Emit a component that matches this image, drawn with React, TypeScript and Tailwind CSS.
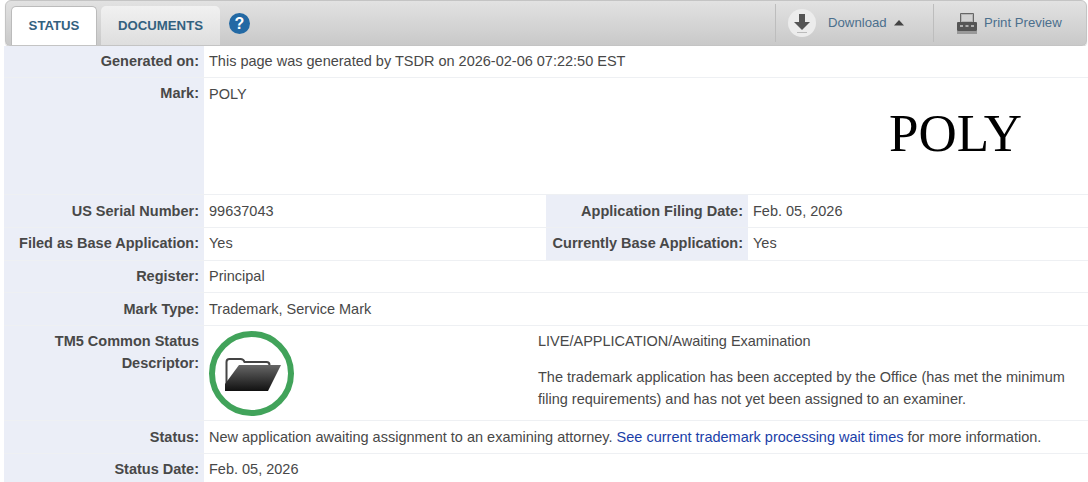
import React from "react";

const font = { fontFamily: '"Liberation Sans", Arial, sans-serif' };

function Row({ label, h, top, children }: { label: React.ReactNode; h: string; top?: boolean; children: React.ReactNode }) {
  const pt = top ? "pt-[7px]" : "pt-[6px]";
  return (
    <div className={`flex ${h} border-b border-[#eef0f3]`}>
      <div className={`w-[200px] shrink-0 bg-[#ebeef7] pr-[5px] ${pt} text-right font-bold leading-[18px] text-[#484848]`}>{label}</div>
      <div className={`min-w-0 flex-1 bg-white pl-[5px] ${pt} leading-[18px]`}>{children}</div>
    </div>
  );
}

function HalfRow({ label, value, label2, value2, top }: { label: string; value: string; label2: string; value2: string; top?: boolean }) {
  const pt = top ? "pt-[7px]" : "pt-[6px]";
  return (
    <div className="flex h-[33px] border-b border-[#eef0f3]">
      <div className={`w-[200px] shrink-0 bg-[#ebeef7] pr-[5px] ${pt} text-right font-bold leading-[18px] text-[#484848]`}>{label}</div>
      <div className={`w-[342px] shrink-0 bg-white pl-[5px] ${pt} leading-[18px]`}>{value}</div>
      <div className={`w-[202px] shrink-0 bg-[#ebeef7] pr-[5px] ${pt} text-right font-bold leading-[18px] text-[#484848]`}>{label2}</div>
      <div className={`flex-1 bg-white pl-[5px] ${pt} leading-[18px]`}>{value2}</div>
    </div>
  );
}

export default function App() {
  return (
    <div className="h-[482px] w-[1088px] overflow-hidden bg-white text-[14.5px] text-[#484848]" style={font}>
      <div className="ml-[5px] mr-[1px] flex h-[46px] items-stretch rounded-t-[6px] rounded-b-[5px] border border-[#c4c4c4] bg-gradient-to-b from-[#e2e2e2] to-[#c9c9c9] pl-[5px] shadow-[0_1px_1px_#ccc]">
        <div className="mt-[5px] flex w-[86px] items-center justify-center rounded-t-[5px] border-x border-t border-[#bbb] bg-white text-[13.2px] font-bold text-[#33617f]">STATUS</div>
        <div className="ml-[4px] mt-[5px] flex w-[119px] items-center justify-center rounded-t-[5px] bg-gradient-to-b from-[#f1f1f1] to-[#dedede] text-[13.2px] font-bold text-[#33617f]">DOCUMENTS</div>
        <div className="ml-[9px] flex items-center">
          <svg width="21" height="21" viewBox="0 0 21 21">
            <circle cx="10.5" cy="10.5" r="10.5" fill="#2369a4" />
            <text x="10.5" y="16" textAnchor="middle" fontSize="16" fontWeight="700" fill="#fff" fontFamily="Liberation Sans">?</text>
          </svg>
        </div>
        <div className="ml-auto flex items-stretch">
          <div className="my-[3px] w-px bg-[#bdbdbd]" />
          <div className="flex w-[157px] items-center pl-[12px]">
            <svg width="28" height="28" viewBox="0 0 28 28">
              <circle cx="14" cy="14" r="14" fill="#ececec" />
              <path d="M11 5h6v8h5l-8 8-8-8h5z" fill="#555" />
              <rect x="9" y="23" width="10" height="1" fill="#bbb" />
            </svg>
            <span className="ml-[12px] text-[13.2px] text-[#4b6f8d]">Download</span>
            <svg className="ml-[7px]" width="10" height="6" viewBox="0 0 10 6"><path d="M5 0l5 5.5H0z" fill="#444" /></svg>
          </div>
          <div className="my-[3px] w-px bg-[#bdbdbd]" />
          <div className="flex w-[152px] items-center pl-[23px]">
            <svg width="20" height="21" viewBox="0 0 20 21">
              <path d="M3.5 .5h13v9h-13z" fill="#b5b5b5" stroke="#666" />
              <path d="M5 3h10M5 5h10M5 7h10" stroke="#eee" />
              <rect x="0" y="9" width="20" height="9" rx="1" fill="#555" />
              <rect x="0" y="18" width="20" height="3" fill="#999" />
              <path d="M3 13h3M8.5 13h3M14 13h3" stroke="#ccc" strokeWidth="1.5" />
            </svg>
            <span className="ml-[7px] text-[13.2px] text-[#4b6f8d]">Print Preview</span>
          </div>
        </div>
      </div>
      <div className="ml-[4px]">
        <Row label="Generated on:" h="h-[32px]">This page was generated by TSDR on 2026-02-06 07:22:50 EST</Row>
        <Row label="Mark:" h="h-[117px]">
          <div className="relative pt-[1px]">
            POLY
            <span className="absolute left-[680px] top-[24px] text-[53px] leading-[50px] text-black" style={{ fontFamily: '"Liberation Serif", serif' }}>POLY</span>
          </div>
        </Row>
        <HalfRow top label="US Serial Number:" value="99637043" label2="Application Filing Date:" value2="Feb. 05, 2026" />
        <HalfRow label="Filed as Base Application:" value="Yes" label2="Currently Base Application:" value2="Yes" />
        <Row label="Register:" h="h-[32px]">Principal</Row>
        <Row top label="Mark Type:" h="h-[33px]">Trademark, Service Mark</Row>
        <div className="flex h-[95px] border-b border-[#eef0f3]">
          <div className="w-[200px] shrink-0 bg-[#ebeef7] pr-[5px] pt-[4px] text-right font-bold leading-[22px] text-[#484848]">TM5 Common Status<br />Descriptor:</div>
          <div className="w-[329px] shrink-0 bg-white pl-[5px] pt-[5px]">
            <div className="flex h-[85px] w-[85px] items-center justify-center rounded-full border-[6px] border-[#41a35a]">
              <svg className="ml-[2px]" width="56" height="36" viewBox="0 0 56 36">
                <defs>
                  <linearGradient id="f" x1="0" y1="0" x2="0" y2="1">
                    <stop offset="0" stopColor="#666" />
                    <stop offset="1" stopColor="#111" />
                  </linearGradient>
                </defs>
                <path d="M1.5 33V6q0-3 3-3h11q3 0 4 3h22q3 0 3 3v2" fill="none" stroke="#444" strokeWidth="2" />
                <path d="M14 9H56L43 35H0V28z" fill="url(#f)" />
              </svg>
            </div>
          </div>
          <div className="flex-1 bg-white pl-[5px] pt-[5px] leading-[20px]">
            <div>LIVE/APPLICATION/Awaiting Examination</div>
            <div className="mt-[15px] leading-[22px]">The trademark application has been accepted by the Office (has met the minimum<br />filing requirements) and has not yet been assigned to an examiner.</div>
          </div>
        </div>
        <Row top label="Status:" h="h-[33px]">
          New application awaiting assignment to an examining attorney. <span className="text-[#1a3ea8]">See current trademark processing wait times</span> for more information.
        </Row>
        <Row label="Status Date:" h="h-[33px]">Feb. 05, 2026</Row>
      </div>
    </div>
  );
}
